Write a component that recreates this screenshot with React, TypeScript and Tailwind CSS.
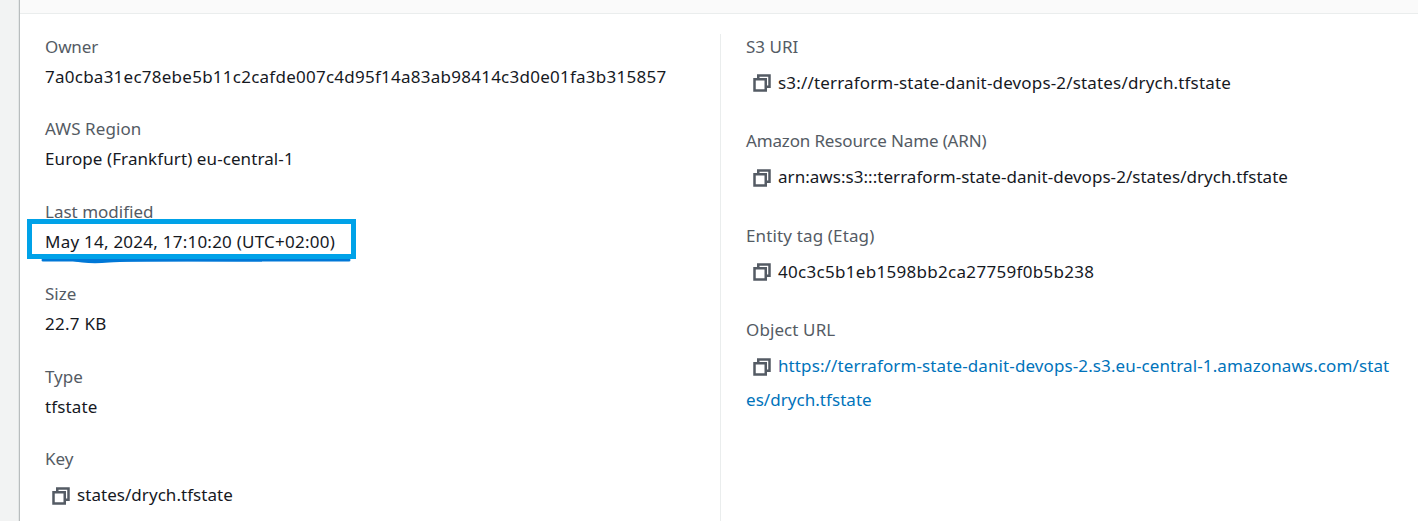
import type { ReactNode } from "react";

function CopyIcon() {
  return (
    <svg width="20" height="20" viewBox="0 0 16 16" fill="none" stroke="#545b64" strokeWidth="2" className="-mx-px mt-[7.4px] shrink-0">
      <path d="M2 5h9v9H2z" />
      <path d="M5 5V2h9v9h-3" />
    </svg>
  );
}

function Label({ children, className = "" }: { children: ReactNode; className?: string }) {
  return <div className={`mb-[2.5px] h-[27.5px] leading-[27.5px] text-[#545b64] ${className}`}>{children}</div>;
}

function Field({ label, labelClass, value, valueClass = "" }: { label: string; labelClass?: string; value: string; valueClass?: string }) {
  return (
    <div className="h-[82.5px]">
      <Label className={labelClass}>{label}</Label>
      <div className={`h-[27.5px] leading-[27.5px] ${valueClass}`}>{value}</div>
    </div>
  );
}

function CopyField({ label, labelClass, children, valueClass = "" }: { label: string; labelClass?: string; children: ReactNode; valueClass?: string }) {
  return (
    <div className="h-[94.4px]">
      <Label className={labelClass}>{label}</Label>
      <div className="flex gap-[7px] pt-[3px] pl-[7px]">
        <CopyIcon />
        <span className={`leading-[34px] ${valueClass}`}>{children}</span>
      </div>
    </div>
  );
}

export default function App() {
  return (
    <div className="flex h-[521px] w-[1418px] overflow-hidden bg-white font-['Noto_Sans',sans-serif] text-[17px] whitespace-nowrap text-[#16191f]">
      <div className="w-5 shrink-0 border-r border-[#b9bdbe] bg-[#f2f3f3] shadow-[inset_-1px_0_0_#e4e7e7]" />
      <div className="flex min-w-0 grow flex-col">
        <div className="h-[14px] shrink-0 border-b border-[#eaeded] bg-[#fafafa]" />
        <div className="flex grow">
          <div className="w-[700px] shrink-0 pt-[18.7px] pl-[25px]">
            <Field label="Owner" labelClass="tracking-[-0.15px]" value="7a0cba31ec78ebe5b11c2cafde007c4d95f14a83ab98414c3d0e01fa3b315857" valueClass="tracking-[0.25px]" />
            <Field label="AWS Region" labelClass="tracking-[0.08px]" value="Europe (Frankfurt) eu-central-1" valueClass="tracking-[0.09px]" />
            <div className="relative">
              <Field label="Last modified" value="May 14, 2024, 17:10:20 (UTC+02:00)" valueClass="tracking-[0.24px]" />
              <svg className="absolute top-[21.3px] -left-[18px]" width="330" height="48" viewBox="0 0 330 48" fill="none">
                <path d="M16 41H322" stroke="#0078d7" strokeWidth="3" strokeLinecap="round" />
                <path d="M44 40Q60 44 82 42Q105 40 235 41" stroke="#0078d7" strokeWidth="3" />
                <path d="M2.5 2.5H326.500V37.500H2.500Z" stroke="#00a2e8" strokeWidth="5" />
              </svg>
            </div>
            <Field label="Size" value="22.7 KB" valueClass="tracking-[0.25px]" />
            <Field label="Type" value="tfstate" valueClass="tracking-[0.15px]" />
            <CopyField label="Key" valueClass="tracking-[0.05px]">states/drych.tfstate</CopyField>
          </div>
          <div className="mt-5 mb-[5px] w-px shrink-0 bg-[#eaeded]" />
          <div className="grow pt-[19px] pl-[25px]">
            <CopyField label="S3 URI" valueClass="tracking-[0.165px]">s3://terraform-state-danit-devops-2/states/drych.tfstate</CopyField>
            <CopyField label="Amazon Resource Name (ARN)" labelClass="tracking-[-0.15px]" valueClass="tracking-[0.04px]">arn:aws:s3:::terraform-state-danit-devops-2/states/drych.tfstate</CopyField>
            <CopyField label="Entity tag (Etag)" labelClass="tracking-[0.14px]" valueClass="tracking-[0.3px]">40c3c5b1eb1598bb2ca27759f0b5b238</CopyField>
            <CopyField label="Object URL" labelClass="tracking-[0.1px]" valueClass="text-[#0073bb] tracking-[0.11px]">
              https://terraform-state-danit-devops-2.s3.eu-central-1.amazonaws.com/stat
              <br />
              <span className="-ml-8 tracking-[0.05px]">es/drych.tfstate</span>
            </CopyField>
          </div>
        </div>
      </div>
    </div>
  );
}
